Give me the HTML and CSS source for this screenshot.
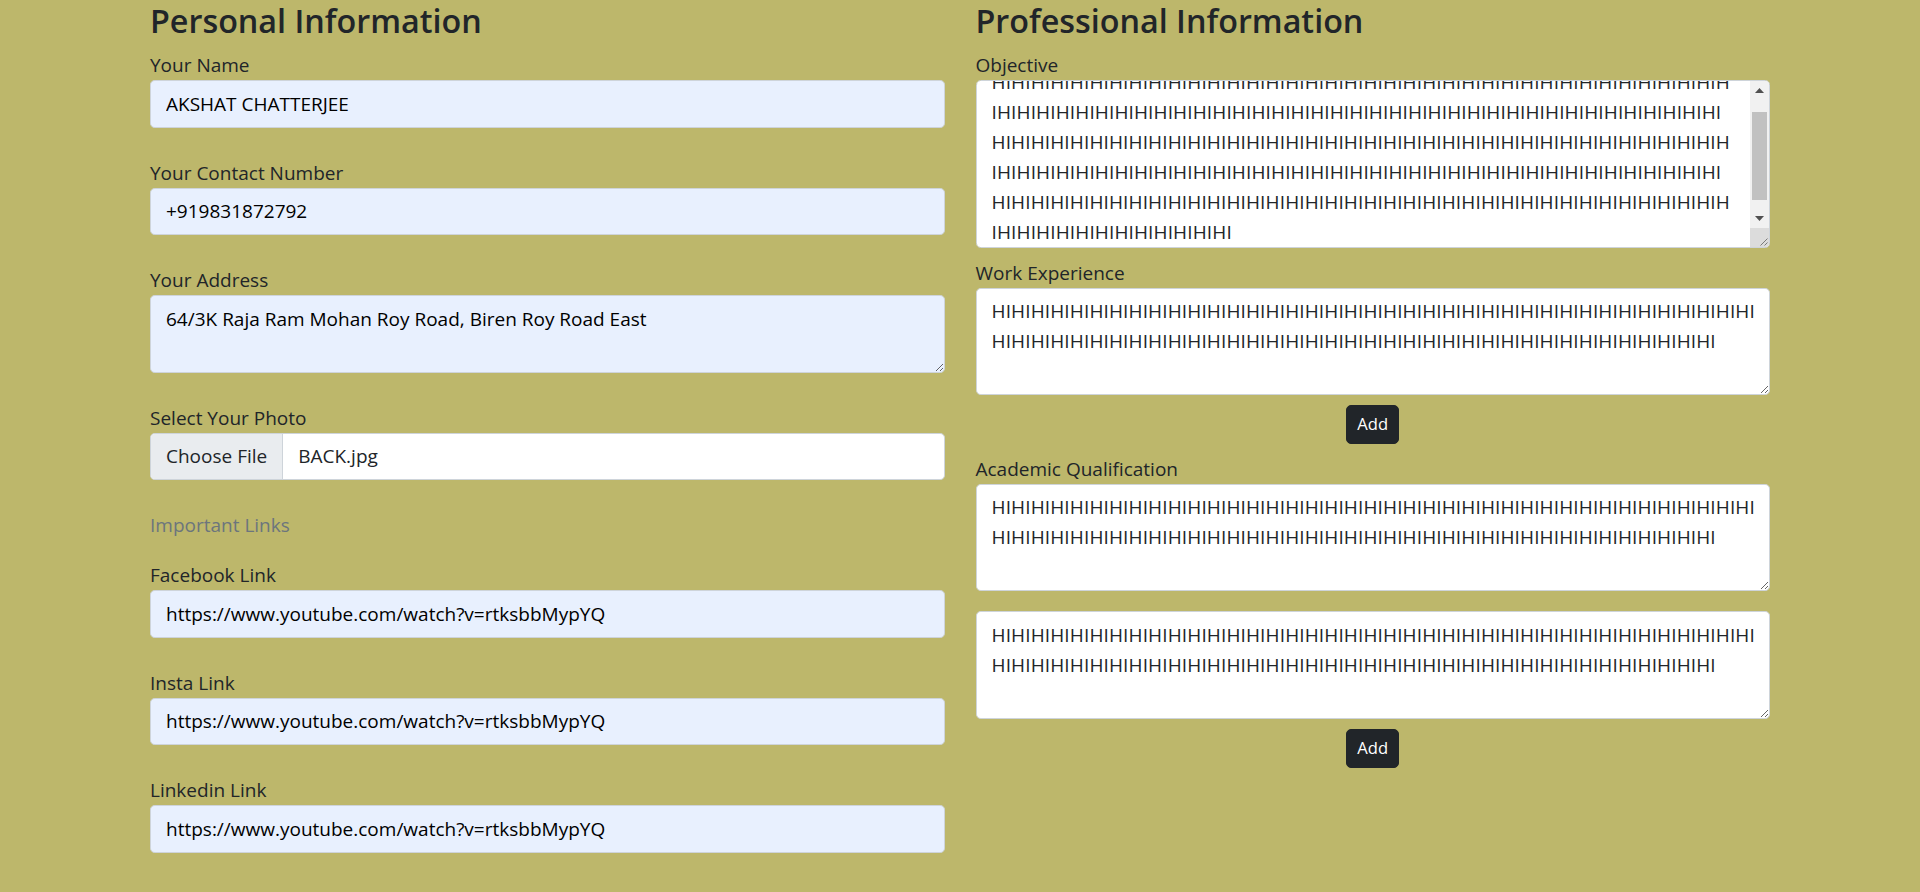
FILE: index.html
```html
<!DOCTYPE html>
<html lang="en">
<head>
<meta charset="utf-8">
<title>Resume Form</title>
<link rel="stylesheet" href="styles.css">
</head>
<body>
<main class="page">
  <section class="col">
    <h3 class="title">Personal Information</h3>
    <div class="field">
      <label class="label" for="name">Your Name</label>
      <input class="input autofill" id="name" type="text" value="AKSHAT CHATTERJEE">
    </div>
    <div class="field">
      <label class="label" for="contact">Your Contact Number</label>
      <input class="input autofill" id="contact" type="text" value="+919831872792">
    </div>
    <div class="field">
      <label class="label" for="address">Your Address</label>
      <textarea class="input autofill area-2" id="address">64/3K Raja Ram Mohan Roy Road, Biren Roy Road East</textarea>
    </div>
    <div class="field">
      <label class="label">Select Your Photo</label>
      <div class="file">
        <span class="file-btn">Choose File</span>
        <span class="file-name">BACK.jpg</span>
      </div>
    </div>
    <div class="muted">Important Links</div>
    <div class="field">
      <label class="label" for="fb">Facebook Link</label>
      <input class="input autofill" id="fb" type="text" value="https://www.youtube.com/watch?v=rtksbbMypYQ">
    </div>
    <div class="field">
      <label class="label" for="insta">Insta Link</label>
      <input class="input autofill" id="insta" type="text" value="https://www.youtube.com/watch?v=rtksbbMypYQ">
    </div>
    <div class="field">
      <label class="label" for="li">Linkedin Link</label>
      <input class="input autofill" id="li" type="text" value="https://www.youtube.com/watch?v=rtksbbMypYQ">
    </div>
  </section>
  <section class="col">
    <h3 class="title">Professional Information</h3>
    <div class="field-sm">
      <label class="label" for="objective">Objective</label>
      <div class="scrollbox">
        <textarea class="input plain area-5 objective" id="objective">HIHIHIHIHIHIHIHIHIHIHIHIHIHIHIHIHIHIHIHIHIHIHIHIHIHIHIHIHIHIHIHIHIHIHIHIHIH
IHIHIHIHIHIHIHIHIHIHIHIHIHIHIHIHIHIHIHIHIHIHIHIHIHIHIHIHIHIHIHIHIHIHIHIHIHI
HIHIHIHIHIHIHIHIHIHIHIHIHIHIHIHIHIHIHIHIHIHIHIHIHIHIHIHIHIHIHIHIHIHIHIHIHIH
IHIHIHIHIHIHIHIHIHIHIHIHIHIHIHIHIHIHIHIHIHIHIHIHIHIHIHIHIHIHIHIHIHIHIHIHIHI
HIHIHIHIHIHIHIHIHIHIHIHIHIHIHIHIHIHIHIHIHIHIHIHIHIHIHIHIHIHIHIHIHIHIHIHIHIH
IHIHIHIHIHIHIHIHIHIHIHIHI</textarea>
        <div class="fake-sb" aria-hidden="true">
          <span class="sb-btn"><svg width="9" height="5" viewBox="0 0 9 5"><path d="M0 5L4.5 0L9 5Z"/></svg></span>
          <span class="sb-track"><span class="sb-thumb"></span></span>
          <span class="sb-btn"><svg width="9" height="5" viewBox="0 0 9 5"><path d="M0 0L9 0L4.5 5Z"/></svg></span>
          <span class="sb-corner"><svg width="19" height="19" viewBox="0 0 19 19"><path d="M17.5 10.5L10.5 17.5M17.5 14.5L14.5 17.5" stroke="#7a7a7a" stroke-width="1" fill="none"/></svg></span>
        </div>
      </div>
    </div>
    <div class="group">
      <label class="label" for="work">Work Experience</label>
      <textarea class="input plain area-3" id="work">HIHIHIHIHIHIHIHIHIHIHIHIHIHIHIHIHIHIHIHIHIHIHIHIHIHIHIHIHIHIHIHIHIHIHIHIHIHIHI
HIHIHIHIHIHIHIHIHIHIHIHIHIHIHIHIHIHIHIHIHIHIHIHIHIHIHIHIHIHIHIHIHIHIHIHIHI</textarea>
      <button class="btn" type="button">Add</button>
    </div>
    <div class="group">
      <label class="label" for="academic">Academic Qualification</label>
      <textarea class="input plain area-3 gap-below" id="academic">HIHIHIHIHIHIHIHIHIHIHIHIHIHIHIHIHIHIHIHIHIHIHIHIHIHIHIHIHIHIHIHIHIHIHIHIHIHIHI
HIHIHIHIHIHIHIHIHIHIHIHIHIHIHIHIHIHIHIHIHIHIHIHIHIHIHIHIHIHIHIHIHIHIHIHIHI</textarea>
      <textarea class="input plain area-3" aria-label="Academic Qualification 2">HIHIHIHIHIHIHIHIHIHIHIHIHIHIHIHIHIHIHIHIHIHIHIHIHIHIHIHIHIHIHIHIHIHIHIHIHIHIHI
HIHIHIHIHIHIHIHIHIHIHIHIHIHIHIHIHIHIHIHIHIHIHIHIHIHIHIHIHIHIHIHIHIHIHIHIHI</textarea>
      <button class="btn" type="button">Add</button>
    </div>
  </section>
</main>
<script src="app.js"></script>
</body>
</html>
```
FILE: styles.css
```css
* {
  box-sizing: border-box;
}

body {
  margin: 0;
  background: #bdb76b;
  font-family: "Open Sans", "Noto Sans", sans-serif;
  font-size: 19px;
  line-height: 30px;
  color: #212529;
}

.page {
  width: 1620px;
  margin: 0 auto;
  display: flex;
  gap: 31px;
  align-items: flex-start;
}

.col {
  flex: 1 1 0;
  min-width: 0;
  display: flex;
  flex-direction: column;
}

.title {
  margin: 0 0 10px;
  font-size: 32.3px;
  font-weight: 600;
  line-height: 40px;
}

.label {
  display: block;
  height: 30px;
}

.field {
  margin-bottom: 30px;
}

.field-sm {
  margin-bottom: 10px;
}

.group {
  display: flex;
  flex-direction: column;
}

.muted {
  color: #6c757d;
  height: 30px;
  margin-bottom: 20px;
}

.input {
  display: block;
  width: 100%;
  height: 47.5px;
  margin: 0;
  padding: 7.5px 15px;
  border: 1px solid #ced4da;
  border-radius: 4.7px;
  font-family: inherit;
  font-size: 19px;
  line-height: 30px;
  color: #212529;
  outline: none;
}

.autofill {
  background: #e8f0fe;
  color: #000;
}

.plain {
  background: #fff;
  letter-spacing: 0.13px;
  padding-right: 4px;
}

textarea.input {
  resize: vertical;
  white-space: pre-wrap;
}

.area-2 {
  height: 77.5px;
}

.area-3 {
  height: 107.5px;
}

.area-5 {
  height: 167.5px;
}

.gap-below {
  margin-bottom: 20px;
}

/* objective box: scrolled content with a classic scrollbar drawn over its right edge */
.scrollbox {
  position: relative;
}

.objective {
  padding-right: 24px;
}

.fake-sb {
  position: absolute;
  top: 1px;
  right: 1px;
  bottom: 1px;
  width: 19px;
  display: flex;
  flex-direction: column;
  background: #f1f1f1;
  border-radius: 0 4px 4px 0;
  overflow: hidden;
  pointer-events: none;
}

.sb-btn {
  height: 19px;
  flex: none;
  display: flex;
  align-items: center;
  justify-content: center;
}

.sb-btn svg {
  fill: #505050;
}

.sb-track {
  flex: 1;
  padding: 12px 2px 0;
}

.sb-thumb {
  display: block;
  height: 88px;
  background: #c1c1c1;
}

.sb-corner {
  height: 19px;
  flex: none;
  background: #dcdcdc;
}

.sb-corner svg {
  display: block;
}

.file {
  display: flex;
  height: 47.5px;
  border: 1px solid #ced4da;
  border-radius: 4.7px;
  background: #fff;
  overflow: hidden;
}

.file-btn {
  background: #e9ecef;
  padding: 7.5px 15px;
  border-right: 1px solid #ced4da;
  margin-right: 15px;
}

.file-name {
  padding: 7.5px 0;
}

.btn {
  align-self: center;
  margin: 10px 0;
  padding: 5.25px 10px;
  border: 1px solid #212529;
  border-radius: 5px;
  background: #212529;
  color: #fff;
  font-family: inherit;
  font-size: 16.6px;
  line-height: 26.25px;
  cursor: pointer;
}
```
FILE: app.js
```js
document.getElementById('objective').scrollTop = 22;
```
